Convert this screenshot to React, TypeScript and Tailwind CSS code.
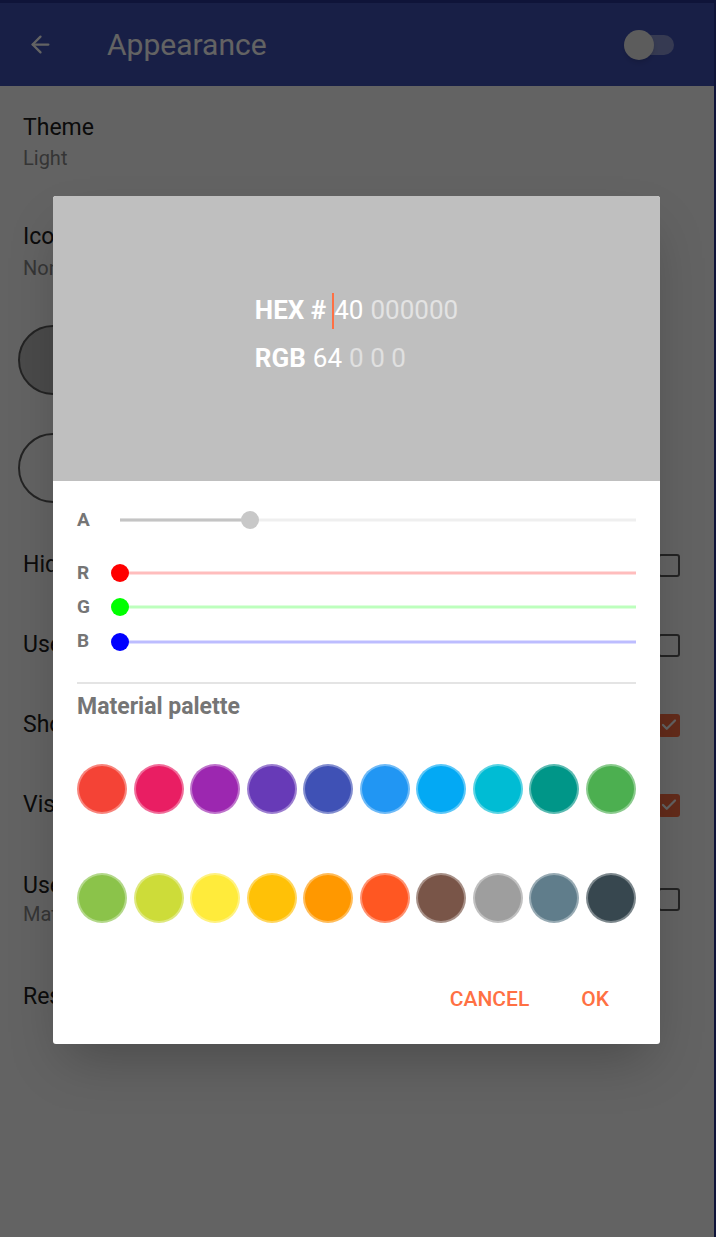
import { ArrowLeft, Check } from 'lucide-react'

// Material palette swatches, written out as full class names
const paletteTop = [
  'bg-[#f44336]',
  'bg-[#e91e63]',
  'bg-[#9c27b0]',
  'bg-[#673ab7]',
  'bg-[#3f51b5]',
  'bg-[#2196f3]',
  'bg-[#03a9f4]',
  'bg-[#00bcd4]',
  'bg-[#009688]',
  'bg-[#4caf50]',
]

const paletteBottom = [
  'bg-[#8bc34a]',
  'bg-[#cddc39]',
  'bg-[#ffeb3b]',
  'bg-[#ffc107]',
  'bg-[#ff9800]',
  'bg-[#ff5722]',
  'bg-[#795548]',
  'bg-[#9e9e9e]',
  'bg-[#607d8b]',
  'bg-[#37474f]',
]

type SliderProps = {
  label: string
  value: number
  track: string
  active: string
  thumb: string
  className: string
}

const ChannelSlider: React.FC<SliderProps> = ({ label, value, track, active, thumb, className }) => {
  const pct = (value / 255) * 100
  return (
    <div className={`flex items-center ${className}`}>
      <div className="w-[33px]">
        <span className="text-[19px] font-bold text-[#757575]">{label}</span>
      </div>
      <div className="relative ml-[10px] h-full flex-1">
        <div className={`absolute left-0 right-0 top-1/2 h-[3px] -translate-y-1/2 ${track}`} />
        <div
          className={`absolute left-0 top-1/2 h-[3px] -translate-y-1/2 ${active}`}
          style={{ width: `${pct}%` }}
        />
        <div
          className={`absolute top-1/2 h-[18px] w-[18px] -translate-x-1/2 -translate-y-1/2 rounded-full ${thumb}`}
          style={{ left: `${pct}%` }}
        />
      </div>
    </div>
  )
}

const CheckBox: React.FC<{ checked?: boolean }> = ({ checked }) =>
  checked ? (
    <div className="flex h-[23px] w-[22px] items-center justify-center rounded-[3px] bg-[#ff7043]">
      <Check size={18} strokeWidth={3} className="text-white" />
    </div>
  ) : (
    <div className="h-[23px] w-[22px] rounded-[3px] border-2 border-[#5c5c5c]" />
  )

const SettingRow: React.FC<{ title: string; sub?: string; checked?: boolean; box?: boolean; h: string }> = ({
  title,
  sub,
  checked,
  box,
  h,
}) => (
  <div className={`flex items-center justify-between ${h}`}>
    <div>
      <div className="text-[23px] leading-[30px] text-[#212121]">{title}</div>
      {sub && <div className="text-[20px] leading-[26px] text-[#8a8a8a]">{sub}</div>}
    </div>
    {box && <CheckBox checked={checked} />}
  </div>
)

export default function App() {
  return (
    <div className="relative h-[1237px] w-[716px] overflow-hidden bg-white font-['Roboto',sans-serif]">
      <div className="flex h-full">
        <div className="flex w-[714px] flex-col">
          {/* Status strip + toolbar */}
          <div className="h-[3px] bg-[#283593]" />
          <header className="flex h-[83px] items-center bg-[#3f51b5] pl-[27px] pr-[40px]">
            <ArrowLeft size={27} strokeWidth={2} className="text-white" />
            <h1 className="ml-[53px] text-[30px] text-white">Appearance</h1>
            <div className="relative ml-auto h-[30px] w-[50px]">
              <div className="absolute left-[8px] right-0 top-[5px] h-[20px] rounded-full bg-white/40" />
              <div className="absolute left-0 top-0 h-[30px] w-[30px] rounded-full bg-[#ececec] shadow-md" />
            </div>
          </header>

          {/* Settings list */}
          <main className="flex flex-col pl-[23px] pr-[34px]">
            <div className="pt-[27px]">
              <div className="text-[23px] leading-[30px] text-[#212121]">Theme</div>
              <div className="mt-[2px] text-[20px] leading-[26px] text-[#8a8a8a]">Light</div>
            </div>
            <div className="pt-[51px]">
              <div className="text-[23px] leading-[30px] text-[#212121]">Icon</div>
              <div className="mt-[3px] text-[20px] leading-[26px] text-[#8a8a8a]">None</div>
            </div>
            <div className="ml-[-5px] mt-[44px] h-[70px] w-[70px] rounded-full border-2 border-[#5c5c5c] bg-[#bfbfbf]" />
            <div className="ml-[-5px] mt-[38px] h-[70px] w-[70px] rounded-full border-2 border-[#5c5c5c] bg-white" />
            <div className="mt-[22px]">
              <SettingRow title="Hide" box h="h-[80px]" />
              <SettingRow title="Use" box h="h-[80px]" />
              <SettingRow title="Show" box checked h="h-[80px]" />
              <SettingRow title="Visible" box checked h="h-[80px]" />
              <SettingRow title="Use" sub="Material" box h="h-[108px]" />
              <SettingRow title="Reset" h="h-[88px]" />
            </div>
          </main>
        </div>
        <div className="w-[2px] bg-[#283593]" />
      </div>

      {/* Scrim + color picker dialog */}
      <div className="absolute inset-0 flex items-center justify-center bg-black/[0.61] pr-[3px] pt-[3px]">
        <div className="flex h-[848px] w-[607px] flex-col overflow-hidden rounded-[3px] bg-white shadow-2xl">
          <div className="flex h-[285px] items-center justify-center bg-[#bfbfbf] pb-[8px]">
            <div className="text-[26px] text-white">
              <div className="flex h-[48px] items-center">
                <span className="font-bold">HEX #</span>
                <span className="ml-[6px] h-[36px] w-[2px] bg-[#ff7043]" />
                <span>40</span>
                <span className="ml-[7px] text-[#e3e3e3]">000000</span>
              </div>
              <div className="flex h-[48px] items-center">
                <span className="font-bold">RGB</span>
                <span className="ml-[7px]">64</span>
                <span className="ml-[7px] text-[#e0e0e0]">0 0 0</span>
              </div>
            </div>
          </div>

          <div className="flex flex-col px-[24px] pt-[24px]">
            <ChannelSlider
              label="A"
              value={64}
              track="bg-[#efefef]"
              active="bg-[#c4c4c4]"
              thumb="bg-[#c8c8c8]"
              className="h-[30px]"
            />
            <ChannelSlider
              label="R"
              value={0}
              track="bg-[#ffbdbd]"
              active="bg-[#ff0000]"
              thumb="bg-[#ff0000]"
              className="mt-[21px] h-[34px]"
            />
            <ChannelSlider
              label="G"
              value={0}
              track="bg-[#bdffbd]"
              active="bg-[#00ff00]"
              thumb="bg-[#00ff00]"
              className="h-[34px]"
            />
            <ChannelSlider
              label="B"
              value={0}
              track="bg-[#bdbdff]"
              active="bg-[#0000ff]"
              thumb="bg-[#0000ff]"
              className="h-[35px]"
            />

            <div className="mt-[23px] h-[2px] bg-[#e4e4e4]" />
            <div className="mt-[9px] text-[23px] font-bold leading-[28px] text-[#757575]">Material palette</div>

            <div className="mt-[43px] flex justify-between">
              {paletteTop.map((c) => (
                <div key={c} className={`h-[50px] w-[50px] rounded-full border-2 border-white/35 ${c}`} />
              ))}
            </div>
            <div className="mt-[59px] flex justify-between">
              {paletteBottom.map((c) => (
                <div key={c} className={`h-[50px] w-[50px] rounded-full border-2 border-white/35 ${c}`} />
              ))}
            </div>
          </div>

          <div className="mt-[53px] flex justify-end pr-[35px]">
            <button className="h-[48px] px-[16px] text-[21px] font-medium text-[#ff7043]">CANCEL</button>
            <button className="ml-[20px] h-[48px] px-[16px] text-[21px] font-medium text-[#ff7043]">OK</button>
          </div>
        </div>
      </div>
    </div>
  )
}
